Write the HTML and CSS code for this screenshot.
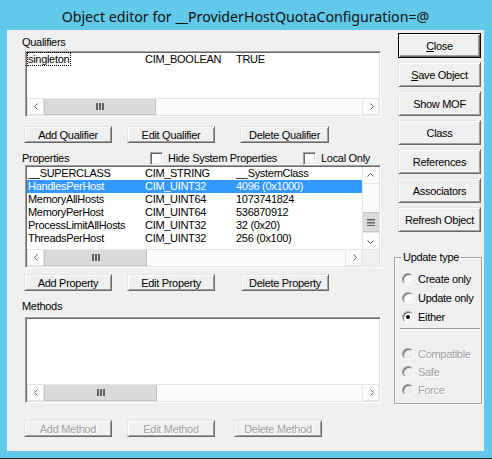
FILE: index.html
```html
<!DOCTYPE html>
<html lang="en">

<head>
    <meta charset="UTF-8">
    <title>Object editor</title>
    <link rel="stylesheet" href="styles.css">
</head>

<body>

    <div class="window">
        <div class="titlebar">Object editor for __ProviderHostQuotaConfiguration=@</div>

        <div class="client">
            <div class="main">
                <div class="label lbl-qual">Qualifiers</div>
                <div class="listbox qual-list">
                    <div class="rows">
                        <div class="row"><span class="c1"><span class="focus">singleton</span></span><span class="c2">CIM_BOOLEAN</span><span class="c3">TRUE</span></div>
                    </div>
                    <div class="hscroll">
                        <div class="arrow"><svg width="17" height="16"><path d="M9.5 4.5 L6.5 7.5 L9.5 10.5" stroke="#606060" fill="none"/></svg></div>
                        <div class="hthumb qual-thumb"><svg width="8" height="7"><rect x="0" y="0" width="2" height="7" fill="#606060"/><rect x="3" y="0" width="2" height="7" fill="#606060"/><rect x="6" y="0" width="2" height="7" fill="#606060"/></svg></div>
                        <div class="track"></div>
                        <div class="arrow"><svg width="17" height="16"><path d="M7.5 4.5 L10.5 7.5 L7.5 10.5" stroke="#606060" fill="none"/></svg></div>
                    </div>
                </div>
                <div class="btnrow row-qual">
                    <button class="btn">Add Qualifier</button>
                    <button class="btn">Edit Qualifier</button>
                    <button class="btn">Delete Qualifier</button>
                </div>

                <div class="prop-head">
                    <span class="label">Properties</span>
                    <span class="check hide-sys"><span class="box"></span>Hide System Properties</span>
                    <span class="check local-only"><span class="box"></span>Local Only</span>
                </div>
                <div class="listbox prop-list">
                    <div class="prop-body">
                        <div class="rows">
                            <div class="row"><span class="c1">__SUPERCLASS</span><span class="c2">CIM_STRING</span><span class="c3">__SystemClass</span></div>
                            <div class="row selected"><span class="c1">HandlesPerHost</span><span class="c2">CIM_UINT32</span><span class="c3">4096 (0x1000)</span></div>
                            <div class="row"><span class="c1">MemoryAllHosts</span><span class="c2">CIM_UINT64</span><span class="c3">1073741824</span></div>
                            <div class="row"><span class="c1">MemoryPerHost</span><span class="c2">CIM_UINT64</span><span class="c3">536870912</span></div>
                            <div class="row"><span class="c1">ProcessLimitAllHosts</span><span class="c2">CIM_UINT32</span><span class="c3">32 (0x20)</span></div>
                            <div class="row"><span class="c1">ThreadsPerHost</span><span class="c2">CIM_UINT32</span><span class="c3">256 (0x100)</span></div>
                        </div>
                        <div class="vscroll">
                            <div class="arrow"><svg width="16" height="17"><path d="M4.5 9.5 L7.5 6.5 L10.5 9.5" stroke="#606060" fill="none"/></svg></div>
                            <div class="vtrack top"></div>
                            <div class="vthumb"><svg width="8" height="7"><rect x="0" y="0" width="8" height="1.5" fill="#606060"/><rect x="0" y="3" width="8" height="1.5" fill="#606060"/><rect x="0" y="6" width="8" height="1.5" fill="#606060"/></svg></div>
                            <div class="arrow"><svg width="16" height="17"><path d="M4.5 7.5 L7.5 10.5 L10.5 7.5" stroke="#606060" fill="none"/></svg></div>
                        </div>
                    </div>
                    <div class="hscroll">
                        <div class="arrow"><svg width="17" height="16"><path d="M9.5 4.5 L6.5 7.5 L9.5 10.5" stroke="#606060" fill="none"/></svg></div>
                        <div class="hthumb prop-thumb"><svg width="8" height="7"><rect x="0" y="0" width="2" height="7" fill="#606060"/><rect x="3" y="0" width="2" height="7" fill="#606060"/><rect x="6" y="0" width="2" height="7" fill="#606060"/></svg></div>
                        <div class="track"></div>
                        <div class="arrow"><svg width="17" height="16"><path d="M7.5 4.5 L10.5 7.5 L7.5 10.5" stroke="#606060" fill="none"/></svg></div>
                        <div class="corner"></div>
                    </div>
                </div>
                <div class="btnrow row-prop">
                    <button class="btn">Add Property</button>
                    <button class="btn">Edit Property</button>
                    <button class="btn">Delete Property</button>
                </div>

                <div class="label lbl-meth">Methods</div>
                <div class="listbox meth-list">
                    <div class="rows"></div>
                    <div class="hscroll">
                        <div class="arrow"><svg width="17" height="16"><path d="M9.5 4.5 L6.5 7.5 L9.5 10.5" stroke="#606060" fill="none"/></svg></div>
                        <div class="hthumb meth-thumb"><svg width="8" height="7"><rect x="0" y="0" width="2" height="7" fill="#606060"/><rect x="3" y="0" width="2" height="7" fill="#606060"/><rect x="6" y="0" width="2" height="7" fill="#606060"/></svg></div>
                        <div class="track"></div>
                        <div class="arrow"><svg width="17" height="16"><path d="M7.5 4.5 L10.5 7.5 L7.5 10.5" stroke="#606060" fill="none"/></svg></div>
                    </div>
                </div>
                <div class="btnrow row-meth">
                    <button class="btn" disabled>Add Method</button>
                    <button class="btn" disabled>Edit Method</button>
                    <button class="btn" disabled>Delete Method</button>
                </div>
            </div>

            <div class="side">
                <button class="btn side-btn default"><u>C</u>lose</button>
                <button class="btn side-btn"><u>S</u>ave Object</button>
                <button class="btn side-btn">Show MOF</button>
                <button class="btn side-btn">Class</button>
                <button class="btn side-btn">References</button>
                <button class="btn side-btn">Associators</button>
                <button class="btn side-btn">Refresh Object</button>

                <fieldset class="group">
                    <legend>Update type</legend>
                    <div class="radio-row first"><span class="radio"></span>Create only</div>
                    <div class="radio-row"><span class="radio"></span>Update only</div>
                    <div class="radio-row"><span class="radio on"></span>Either</div>
                    <div class="sep"></div>
                    <div class="radio-row off gap"><span class="radio"></span>Compatible</div>
                    <div class="radio-row off"><span class="radio"></span>Safe</div>
                    <div class="radio-row off"><span class="radio"></span>Force</div>
                </fieldset>
            </div>
        </div>
    </div>

</body>

</html>
```

FILE: styles.css
```css
* {
    box-sizing: border-box;
}

html,
body {
    margin: 0;
    padding: 0;
}

body {
    width: 492px;
    height: 459px;
    overflow: hidden;
    background-color: #62c9eb;
    font-family: "Liberation Sans", Arial, sans-serif;
    font-size: 11px;
    letter-spacing: -0.3px;
    color: #000;
}

.window {
    width: 492px;
    height: 459px;
    display: flex;
    flex-direction: column;
    padding: 0 8px 7px 7px;
    border-bottom: 1px solid #2b2b2b;
}

.titlebar {
    height: 30px;
    display: flex;
    align-items: center;
    justify-content: center;
    padding-top: 2px;
    font-family: "Noto Sans", sans-serif;
    font-size: 14.2px;
    letter-spacing: 0;
    color: #111;
}

.client {
    flex: 1;
    display: flex;
    background-color: #f0f0f0;
}

.main {
    width: 384px;
    padding-left: 15px;
}

.side {
    flex: 1;
    display: flex;
    flex-direction: column;
    align-items: flex-start;
    padding-top: 3px;
}

.label {
    height: 13px;
    line-height: 13px;
}

.lbl-qual {
    margin-top: 6px;
}

.lbl-meth {
    margin-top: 9px;
}

/* list views */
.listbox {
    margin-left: 3px;
    width: 356px;
    display: flex;
    flex-direction: column;
    background-color: #fff;
    border: 1px solid;
    border-color: #a0a0a0 #fff #fff #a0a0a0;
    box-shadow: inset 1px 1px #696969, inset -1px -1px #e3e3e3;
    padding: 1px;
}

.qual-list {
    margin-top: 2px;
    height: 66px;
}

.prop-list {
    height: 103px;
}

.meth-list {
    margin-top: 4px;
    height: 86px;
}

.rows {
    flex: 1;
}

.row {
    display: flex;
    height: 13px;
    line-height: 13px;
    white-space: nowrap;
}

.row .c1 {
    width: 118px;
    padding-left: 1px;
}

.row .c2 {
    width: 91px;
}

.row.selected {
    background-color: #3399ff;
    color: #fff;
}

.focus {
    outline: 1px dotted #000;
    outline-offset: 0;
    padding: 0 1px 0 0;
}

.prop-body {
    flex: 1;
    display: flex;
}

.hscroll {
    height: 17px;
    display: flex;
    background-color: #fcfcfc;
    border-top: 1px solid #e6e6e6;
}

.hscroll .arrow {
    width: 17px;
    height: 16px;
    border: 1px solid #e6e6e6;
    border-top: none;
    background-color: #fcfcfc;
}

.hscroll .arrow svg,
.vscroll .arrow svg {
    display: block;
}

.hthumb {
    display: flex;
    align-items: center;
    justify-content: center;
    height: 16px;
    background-color: #dadada;
    border: 1px solid #c2c2c2;
    border-top: none;
}

.qual-thumb {
    width: 112px;
}

.prop-thumb {
    width: 103px;
}

.meth-thumb {
    width: 113px;
}

.track {
    flex: 1;
}

.corner {
    width: 17px;
    background-color: #f0f0f0;
}

.vscroll {
    width: 17px;
    display: flex;
    flex-direction: column;
    background-color: #fcfcfc;
    border-left: 1px solid #e6e6e6;
}

.vscroll .arrow {
    height: 17px;
    border-bottom: 1px solid #e6e6e6;
}

.vscroll .arrow:last-child {
    border-top: 1px solid #e6e6e6;
    border-bottom: none;
}

.vtrack.top {
    flex: 1;
}

.vthumb {
    height: 20px;
    display: flex;
    align-items: center;
    justify-content: center;
    background-color: #dadada;
    border-top: 1px solid #c2c2c2;
    border-bottom: 1px solid #c2c2c2;
}

/* buttons */
.btn {
    height: 17px;
    width: 88px;
    padding: 0;
    font-family: "Liberation Sans", Arial, sans-serif;
    font-size: 11px;
    letter-spacing: -0.3px;
    color: #000;
    background-color: #f0f0f0;
    border: 1px solid;
    border-color: #e3e3e3 #696969 #696969 #e3e3e3;
    box-shadow: inset 1px 1px #fff, inset -1px -1px #a0a0a0;
    border-radius: 0;
}

.btn:disabled {
    color: #a0a0a0;
    text-shadow: 1px 1px 0 #fff;
}

.btnrow {
    display: flex;
    margin-left: 2px;
}

.btnrow .btn + .btn {
    margin-left: 15px;
}

.row-qual {
    margin-top: 9px;
}

.row-qual .btn:last-child {
    margin-left: 25px;
    width: 89px;
}

.row-prop {
    margin-top: 6px;
}

.row-prop .btn:last-child {
    margin-left: 26px;
}

.row-meth {
    margin-top: 17px;
}

.row-meth .btn:last-child {
    margin-left: 19px;
}

.side-btn {
    width: 83px;
    height: 25px;
    margin-left: 7px;
    margin-bottom: 4px;
}

.side-btn.default {
    border-color: #000;
    box-shadow: inset 1px 1px #fff, inset -1px -1px #696969, inset -2px -2px #a0a0a0;
}

/* properties header */
.prop-head {
    display: flex;
    align-items: center;
    height: 14px;
    margin-top: 8px;
}

.prop-head .label {
    width: 128px;
}

.check {
    display: flex;
    align-items: center;
    height: 13px;
}

.check .box {
    width: 13px;
    height: 13px;
    margin-right: 5px;
    background-color: #fff;
    border: 1px solid;
    border-color: #a0a0a0 #fff #fff #a0a0a0;
    box-shadow: inset 1px 1px #696969, inset -1px -1px #e3e3e3;
}

.hide-sys {
    width: 153px;
}

/* update type group */
.group {
    margin: 15px 0 0 3px;
    padding: 0 0 2px 0;
    width: 88px;
    height: 153px;
    border: 1px solid #a0a0a0;
    box-shadow: inset 1px 1px #fff, 1px 1px #fff;
}

.group legend {
    margin-left: 6px;
    padding: 0 2px;
    line-height: 13px;
}

.radio-row {
    display: flex;
    align-items: center;
    height: 19px;
    padding-left: 7px;
}

.radio-row.first {
    margin-top: 5px;
}

.radio-row.off {
    height: 18px;
    color: #a0a0a0;
    text-shadow: 1px 1px 0 #fff;
}

.radio-row.gap {
    margin-top: 15px;
}

.radio {
    position: relative;
    width: 12px;
    height: 12px;
    margin-right: 4px;
    border-radius: 50%;
    background-color: #fff;
    border: 1px solid;
    border-color: #a0a0a0 #fff #fff #a0a0a0;
    box-shadow: inset 1px 1px #696969, inset -1px -1px #e3e3e3;
}

.radio-row.off .radio {
    background-color: #f0f0f0;
}

.radio.on::after {
    content: '';
    position: absolute;
    left: 3px;
    top: 3px;
    width: 4px;
    height: 4px;
    border-radius: 50%;
    background-color: #000;
}

.sep {
    margin: 2px 1px 0 5px;
    height: 2px;
    border-top: 1px solid #a0a0a0;
    border-bottom: 1px solid #fff;
}
```
